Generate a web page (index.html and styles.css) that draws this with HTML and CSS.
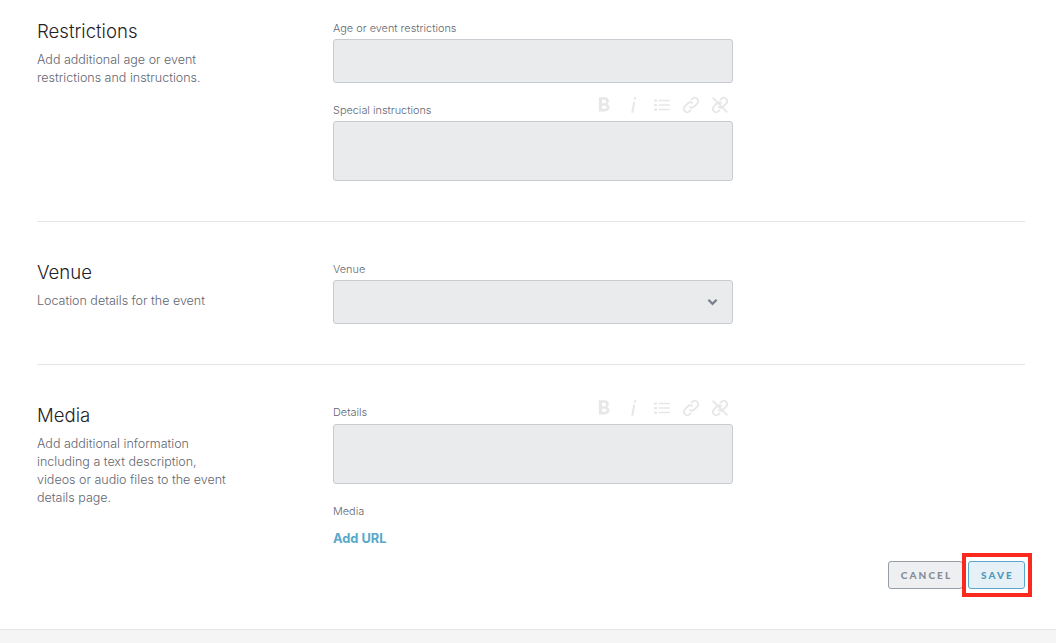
FILE: index.html
```html
<!DOCTYPE html>
<html lang="en">
<head>
<meta charset="utf-8">
<title>Event form</title>
<link rel="stylesheet" href="styles.css">
</head>
<body>
<main class="page">
  <section class="section section-first">
    <div class="intro">
      <h2>Restrictions</h2>
      <p>Add additional age or event<br>restrictions and instructions.</p>
    </div>
    <div class="fields">
      <div class="field">
        <label>Age or event restrictions</label>
        <div class="input short"></div>
      </div>
      <div class="field field-rich">
        <div class="label-row">
          <label>Special instructions</label>
          <div class="toolbar">
            <svg viewBox="0 0 14 14" class="tool"><path d="M3 1h4.600c2 0 3.200 1 3.200 2.900 0 1-.5 1.900-1.400 2.300 1.200.3 1.900 1.300 1.900 2.600 0 2.200-1.500 3.200-3.600 3.200H3zm2.400 2v2.600h1.900c.9 0 1.300-.5 1.300-1.300S8.200 3 7.300 3zm0 4.500V10h2.200c1 0 1.500-.5 1.500-1.300 0-.8-.5-1.200-1.500-1.200z"/></svg>
            <svg viewBox="0 0 14 14" class="tool"><path d="M7.800 1h1.700l-.3 1.700H7.500zM7.200 4.500h1.600L7.200 13H5.600z"/></svg>
            <svg viewBox="0 0 16 14" class="tool"><path d="M1 2h2.500v2H1zM1 6h2.500v2H1zM1 10h2.500v2H1zM5 2.300h10v1.400H5zM5 6.300h10v1.400H5zM5 10.300h10v1.400H5z"/></svg>
            <svg viewBox="0 0 16 16" class="tool tool-link"><path fill="none" d="M6.500 9.500a3 3 0 0 0 4.300 0l2.700-2.700a3 3 0 0 0-4.300-4.300L8 3.700M9.500 6.500a3 3 0 0 0-4.300 0l-2.700 2.700a3 3 0 0 0 4.300 4.300L8 12.300"/></svg>
            <svg viewBox="0 0 16 16" class="tool tool-link"><path fill="none" d="M6.500 9.500a3 3 0 0 0 4.300 0l2.700-2.700a3 3 0 0 0-4.300-4.300L8 3.700M9.500 6.500a3 3 0 0 0-4.300 0l-2.700 2.700a3 3 0 0 0 4.300 4.300L8 12.300M1.500 1.500l13 13"/></svg>
          </div>
        </div>
        <div class="input tall"></div>
      </div>
    </div>
  </section>

  <section class="section section-venue">
    <div class="intro">
      <h2>Venue</h2>
      <p>Location details for the event</p>
    </div>
    <div class="fields">
      <div class="field">
        <label>Venue</label>
        <div class="input short select">
          <svg viewBox="0 0 12 8" class="chevron"><path d="M1.500 1.500 6 6l4.500-4.500" fill="none"/></svg>
        </div>
      </div>
    </div>
  </section>

  <section class="section section-media">
    <div class="intro">
      <h2>Media</h2>
      <p>Add additional information<br>including a text description,<br>videos or audio files to the event<br>details page.</p>
    </div>
    <div class="fields">
      <div class="field field-rich">
        <div class="label-row">
          <label>Details</label>
          <div class="toolbar">
            <svg viewBox="0 0 14 14" class="tool"><path d="M3 1h4.600c2 0 3.200 1 3.200 2.900 0 1-.5 1.900-1.400 2.300 1.200.3 1.900 1.300 1.900 2.600 0 2.200-1.500 3.200-3.600 3.200H3zm2.400 2v2.600h1.900c.9 0 1.300-.5 1.300-1.300S8.200 3 7.300 3zm0 4.500V10h2.200c1 0 1.500-.5 1.500-1.300 0-.8-.5-1.200-1.500-1.200z"/></svg>
            <svg viewBox="0 0 14 14" class="tool"><path d="M7.800 1h1.700l-.3 1.700H7.500zM7.200 4.500h1.600L7.200 13H5.600z"/></svg>
            <svg viewBox="0 0 16 14" class="tool"><path d="M1 2h2.500v2H1zM1 6h2.500v2H1zM1 10h2.500v2H1zM5 2.300h10v1.400H5zM5 6.300h10v1.400H5zM5 10.300h10v1.400H5z"/></svg>
            <svg viewBox="0 0 16 16" class="tool tool-link"><path fill="none" d="M6.500 9.500a3 3 0 0 0 4.300 0l2.700-2.700a3 3 0 0 0-4.300-4.300L8 3.700M9.500 6.500a3 3 0 0 0-4.300 0l-2.700 2.700a3 3 0 0 0 4.300 4.300L8 12.300"/></svg>
            <svg viewBox="0 0 16 16" class="tool tool-link"><path fill="none" d="M6.500 9.500a3 3 0 0 0 4.300 0l2.700-2.700a3 3 0 0 0-4.300-4.300L8 3.700M9.500 6.500a3 3 0 0 0-4.300 0l-2.700 2.700a3 3 0 0 0 4.300 4.300L8 12.300M1.500 1.500l13 13"/></svg>
          </div>
        </div>
        <div class="input tall"></div>
      </div>
      <div class="field field-media">
        <label>Media</label>
        <a class="add-url">Add URL</a>
      </div>
    </div>
  </section>

  <div class="actions">
    <button class="btn btn-cancel">CANCEL</button>
    <button class="btn btn-save">SAVE<span class="highlight"></span></button>
  </div>
</main>
<footer class="footer"></footer>
</body>
</html>
```
FILE: styles.css
```css
* { box-sizing: border-box; }
html, body { margin: 0; height: 643px; overflow: hidden; background: #fff; }
body { font-family: "Inter", "Liberation Sans", sans-serif; color: #6f7680; display: flex; flex-direction: column; }
.page { height: 629px; padding: 0 31px 0 37px; }
.section { display: flex; border-bottom: 1px solid #e3e4e6; }
.section-first { height: 222px; padding-top: 20px; }
.section-venue { height: 143px; padding-top: 39px; }
.section-media { border-bottom: 0; padding-top: 39px; }
.intro { width: 296px; flex: none; }
h2 { margin: 0; font-size: 18.600px; line-height: 22px; font-weight: 300; color: #1f2227; }
.intro p { margin: 9px 0 0; font-size: 12.500px; line-height: 18px; font-weight: 300; color: #5f6671; }
.fields { width: 400px; margin-top: 1px; }
.section-media .fields { margin-top: -4px; }
label { display: block; font-size: 10.900px; line-height: 14px; font-weight: 300; color: #5f6671; }
.field .input { margin-top: 4px; }
.input { background: #eaebed; border: 1px solid #c8cbd0; border-radius: 3px; }
.short { height: 44px; }
.tall { height: 60px; }
.field-rich { margin-top: 14px; }
.section-media .field-rich { margin-top: 0; }
.label-row { display: flex; justify-content: space-between; align-items: flex-end; height: 20px; }
.section-media .label-row label { margin-bottom: 1px; }
.label-row .toolbar { margin-bottom: 3px; }
.toolbar { display: flex; align-items: center; gap: 11px; padding-right: 4px; }
.tool { width: 18px; height: 18px; fill: #e6e7e9; stroke: #e6e7e9; stroke-width: 0; }
.tool-link { stroke-width: 1.700; }
.select { display: flex; align-items: center; justify-content: flex-end; padding-right: 14px; }
.chevron { width: 11px; height: 8px; stroke: #7a808a; stroke-width: 2.500; }
.field-media { margin-top: 20px; }
.add-url { display: block; margin-top: 13px; font-size: 12.800px; line-height: 16px; font-weight: 700; color: #57a8cb; }
.actions { display: flex; justify-content: flex-end; gap: 5px; margin-top: 14px; }
.btn { position: relative; height: 28px; font-family: "Lato", "Liberation Sans", sans-serif; font-size: 10px; font-weight: 900; letter-spacing: 2.100px; border-radius: 3px; padding: 0 0 0 2px; }
.btn-cancel { width: 75px; background: #eeeff1; border: 1px solid #989ea6; color: #858b94; }
.btn-save { width: 57px; background: #e5f1f7; border: 1px solid #5aa9cc; color: #5198bb; }
.highlight { position: absolute; left: -7px; top: -9px; width: 70px; height: 44px; border: 4px solid #fb2a1e; pointer-events: none; }
.footer { height: 14px; background: #f5f5f5; border-top: 1px solid #e3e4e6; flex: none; }
```
